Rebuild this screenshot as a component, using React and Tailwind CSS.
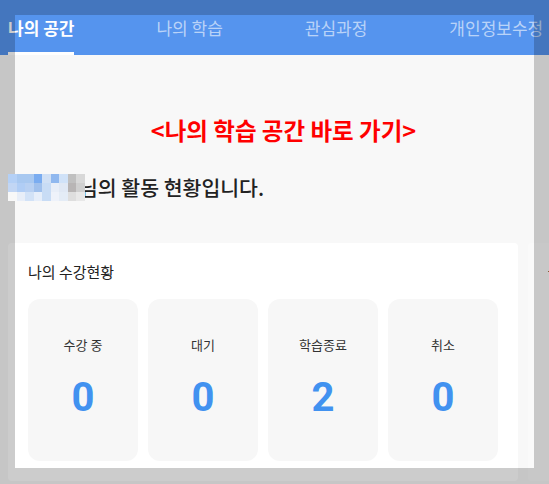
import React from 'react';

const tabs = ['나의 공간', '나의 학습', '관심과정', '개인정보수정'];

const stats = [
  { label: '수강 중', value: 0 },
  { label: '대기', value: 0 },
  { label: '학습종료', value: 2 },
  { label: '취소', value: 0 }
];

// pixelated (masked) user name
const mosaic = [
  ['#b4d0f6', '#a8c8f0', '#a8c8f0', '#7aacf0', '#d0e0f5', '#90b8ef', '#d0e2f8', '#c0c0c0', '#d8d8d8'],
  ['#c2d6f4', '#b0cdf5', '#b8d0f2', '#a0c0ec', '#c8dcf5', '#e8eef8', '#e0e8f4', '#b8b5b5', '#cfcfcf'],
  ['#f8f8f8', '#e8eef8', '#d2e2f7', '#e6eefa', '#c8dcf5', '#eef2fa', '#e4ecf6', '#dedede', '#e8e8e8']
];

const App = () => {
  return (
    <div className="relative min-h-screen overflow-hidden bg-[#f8f8f8] font-['Noto_Sans_CJK_KR','Noto_Sans',sans-serif]">
      {/* Tabs */}
      <div className="flex h-[55px] gap-[82px] bg-[#5594ee] px-2">
        {tabs.map((tab, i) => (
          <div
            key={tab}
            className={`flex items-center whitespace-nowrap border-b-[3px] pt-[4px] text-[17px] ${
              i === 0 ? 'border-white font-bold text-white' : 'border-transparent text-white/60'
            }`}
          >
            {tab}
          </div>
        ))}
      </div>

      {/* Shortcut link */}
      <div className="pt-[60px] pl-[18px] text-center">
        <span className="text-[23.5px] leading-[30px] font-bold text-[#ff0000]">&lt;나의 학습 공간 바로 가기&gt;</span>
      </div>

      {/* Greeting */}
      <div className="mt-[29px] flex h-[27px] items-center pl-2">
        <div className="relative z-10 grid h-[27px] w-[77px] shrink-0 grid-cols-9 grid-rows-3">
          {mosaic.flat().map((c, i) => (
            <div key={i} style={{ backgroundColor: c }} />
          ))}
        </div>
        <span className="-ml-[6px] text-[20.5px] font-medium text-[#222]">님의 활동 현황입니다.</span>
      </div>

      {/* Cards */}
      <div className="mt-[42px] flex gap-[10px] pl-2">
        <div className="w-[510px] shrink-0 rounded-[4px] bg-white px-5 pt-[19px] pb-5">
          <div className="text-[15px] leading-5 text-[#222]">나의 수강현황</div>
          <div className="mt-[17px] grid grid-cols-4 gap-[10px]">
            {stats.map((s) => (
              <div key={s.label} className="flex h-[162px] flex-col items-center rounded-[12px] bg-[#f7f7f7] pt-[36px]">
                <div className="text-[13px] leading-5 text-[#333]">{s.label}</div>
                <div className="mt-[23px] font-['Roboto',sans-serif] text-[40px] leading-[40px] font-bold text-[#4192f0]">
                  {s.value}
                </div>
              </div>
            ))}
          </div>
        </div>
        <div className="w-[510px] shrink-0 rounded-[4px] bg-[#fafafa] pl-5 pt-[28px]">
          <div className="h-px w-[3px] bg-[#b0703a]" />
        </div>
      </div>

      {/* Highlight overlay */}
      <div className="pointer-events-none absolute top-[15px] left-[15px] h-[453px] w-[519px] shadow-[0_0_0_9999px_rgba(0,0,0,0.2)]" />
    </div>
  );
};

export default App;
